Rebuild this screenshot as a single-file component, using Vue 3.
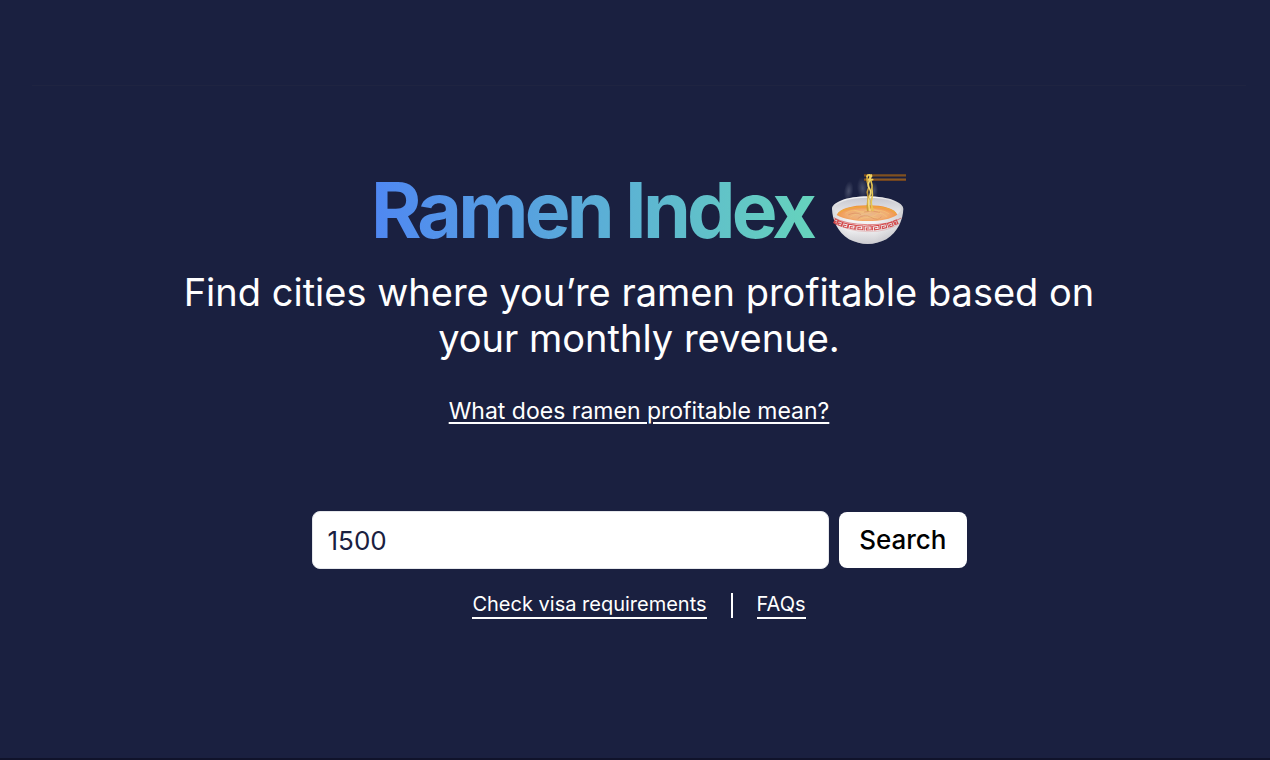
<script setup>
import { ref } from 'vue'

const revenue = ref('1500')
const submitted = ref('')

function search() {
  submitted.value = revenue.value
}

// One meander of the band; each is placed along the curve of the bowl.
const keys = [
  { x: 54, y: 179, angle: 24, width: 10 },
  { x: 65, y: 184, angle: 20, width: 14 },
  { x: 81, y: 190, angle: 14, width: 17 },
  { x: 101, y: 194, angle: 9, width: 20 },
  { x: 124, y: 197, angle: 3, width: 21 },
  { x: 149, y: 198, angle: -2, width: 21 },
  { x: 173, y: 197, angle: -8, width: 20 },
  { x: 196, y: 193, angle: -13, width: 18 },
  { x: 217, y: 188, angle: -20, width: 14 },
  { x: 233, y: 181, angle: -25, width: 10 },
]
</script>

<template>
  <div class="page">
    <hr class="rule" />
    <main class="hero">
      <h1 class="title">
        <span class="name">Ramen Index</span>
        <svg class="bowl" viewBox="39 38 228 216" role="img" aria-label="Steaming bowl">
          <defs>
            <linearGradient id="body" x1="0" y1="0" x2="1" y2="0">
              <stop offset="0" stop-color="#d9d9dc" />
              <stop offset=".25" stop-color="#f3f3f4" />
              <stop offset=".6" stop-color="#f4f3f4" />
              <stop offset="1" stop-color="#cfcfd3" />
            </linearGradient>
            <linearGradient id="shade" x1="0" y1="0" x2="0" y2="1">
              <stop offset=".55" stop-color="#8d8d98" stop-opacity="0" />
              <stop offset="1" stop-color="#8d8d98" stop-opacity=".4" />
            </linearGradient>
            <linearGradient id="inner" x1="0" y1="0" x2="0" y2="1">
              <stop offset="0" stop-color="#c8c8d0" />
              <stop offset=".5" stop-color="#dedee2" />
              <stop offset="1" stop-color="#f4f4f4" />
            </linearGradient>
            <radialGradient id="broth" cx=".5" cy=".6" r=".55">
              <stop offset="0" stop-color="#e9b98f" />
              <stop offset=".6" stop-color="#f0ad73" />
              <stop offset="1" stop-color="#f28c3c" />
            </radialGradient>
            <radialGradient id="steam">
              <stop offset="0" stop-color="#8b92a6" stop-opacity=".4" />
              <stop offset="1" stop-color="#8b92a6" stop-opacity="0" />
            </radialGradient>
          </defs>
          <ellipse cx="92" cy="92" rx="14" ry="30" fill="url(#steam)" transform="rotate(8 92 92)" />
          <ellipse cx="134" cy="84" rx="17" ry="34" fill="url(#steam)" transform="rotate(-6 134 84)" />
          <ellipse cx="168" cy="90" rx="12" ry="26" fill="url(#steam)" />
          <path d="M42 146C41 127 85 108 149 108S257 127 256 146C255 178 240 215 205 237Q176 251 149 251T93 237C58 215 43 178 42 146Z" fill="url(#body)" />
          <path d="M42 146C43 178 58 215 93 237Q122 251 149 251T205 237C240 215 255 178 256 146Q235 190 149 192T42 146Z" fill="url(#shade)" />
          <ellipse cx="149" cy="146" rx="100" ry="34" fill="url(#inner)" />
          <path d="M56 164C65 145 101 135 149 135S230 145 238 163C219 176 187 182 149 182S78 177 56 164Z" fill="url(#broth)" />
          <path d="M60 160C75 146 105 139 149 139S222 146 234 160" fill="none" stroke="#eda83f" stroke-width="4" />
          <g fill="none" stroke="#f6d37c" stroke-width="2" stroke-linecap="round" opacity=".6">
            <path d="M83 158Q105 144 126 154T164 152Q190 145 213 160" />
            <path d="M98 170Q118 154 140 165T180 158Q196 157 207 170" />
            <path d="M110 150Q131 160 148 149T188 158" />
            <path d="M123 177Q149 165 184 175" />
          </g>
          <g fill="none" stroke="#c86e49" stroke-width="2" stroke-linecap="round" opacity=".5">
            <path d="M92 163Q112 154 128 162" />
            <path d="M120 174Q138 159 159 171T190 170" />
            <path d="M139 155Q164 148 185 156" />
          </g>
          <g fill="none">
            <path d="M138 45H264" stroke="#80501f" stroke-width="7" />
            <path d="M138 58H264" stroke="#8f5c26" stroke-width="7" />
            <path d="M138 60H264" stroke="#6f4019" stroke-width="2" />
          </g>
          <g fill="none" stroke-linecap="round" stroke-linejoin="round">
            <path d="M149 44C143 60 149 67 152 77S143 91 149 103S145 122 149 150" stroke="#caa039" stroke-width="5" />
            <path d="M160 44C151 54 164 67 162 79S166 98 162 112S159 126 164 150" stroke="#e8c650" stroke-width="5" />
            <path d="M154 44C164 53 147 66 151 78S163 89 156 105S151 130 156 151" stroke="#f4db75" stroke-width="5" />
            <path d="M147 48Q153 39 161 47L151 59L164 58" stroke="#f0d15e" stroke-width="5" />
            <path d="M155 71Q166 78 154 91T157 119V144" stroke="#9e7421" stroke-width="1" />
          </g>
          <path d="M47 172Q82 192 149 193T250 173" fill="none" stroke="#d64f51" stroke-width="2" />
          <g v-for="key in keys" :key="key.x" :transform="`translate(${key.x} ${key.y + 5}) rotate(${key.angle})`">
            <path
              :d="`M${-key.width / 2} 7V-6H${key.width / 2}V6H${-key.width / 5}V0H${key.width / 4}`"
              fill="none"
              stroke="#d34648"
              stroke-width="3"
            />
          </g>
          <path d="M51 187Q88 213 149 214T247 188" fill="none" stroke="#d98182" stroke-width="1" />
        </svg>
      </h1>
      <p class="tagline">Find cities where you’re ramen profitable based on your monthly revenue.</p>
      <a class="explain" href="#meaning">What does ramen profitable mean?</a>
      <form class="search" @submit.prevent="search">
        <input v-model="revenue" class="field" type="text" inputmode="numeric" aria-label="Monthly revenue" />
        <button class="submit" type="submit">Search</button>
      </form>
      <nav class="links">
        <a href="#visa">Check visa requirements</a>
        <span class="divider"></span>
        <a href="#faqs">FAQs</a>
      </nav>
    </main>
  </div>
</template>

<style>
body {
  background: #1a2040;
}
</style>

<style scoped>
.page {
  box-sizing: border-box;
  min-height: 100vh;
  padding: 85px 24px 0 32px;
  border-bottom: 2px solid #10132b;
  background: #1a2040;
  color: #fff;
  font-family: Inter, "Liberation Sans", sans-serif;
}
.rule {
  height: 1px;
  margin: 0;
  border: 0;
  background: #1f2441;
}
.hero {
  display: flex;
  flex-direction: column;
  align-items: center;
  padding-top: 77px;
}
.title {
  display: flex;
  align-items: center;
  gap: 12px;
  margin: 0;
  font-size: 77px;
  font-weight: 700;
  line-height: 94px;
  letter-spacing: -0.05em;
}
.name {
  padding-right: 6px;
  background: linear-gradient(to right, #4f87f2, #66d4bc);
  background-clip: text;
  color: transparent;
}
.bowl {
  width: 76px;
  height: 72px;
  margin-bottom: 2px;
}
.tagline {
  max-width: 960px;
  margin: 12px 0 0;
  font-size: 38px;
  line-height: 46px;
  text-align: center;
}
.explain {
  margin-top: 34px;
  color: inherit;
  font-size: 23px;
  line-height: 32px;
  text-underline-offset: 3px;
  text-decoration-thickness: 2px;
}
.search {
  display: flex;
  align-items: center;
  gap: 10px;
  width: 100%;
  max-width: 655px;
  margin-top: 84px;
}
.field {
  box-sizing: border-box;
  flex: 1;
  min-width: 0;
  height: 58px;
  padding: 0 15px;
  border: 1px solid #e5e7eb;
  border-radius: 8px;
  background: #fff;
  color: #1a2040;
  font: 400 26px/32px Inter, "Liberation Sans", sans-serif;
}
.submit {
  height: 56px;
  padding: 0 20px;
  border: 0;
  border-radius: 8px;
  background: #fff;
  color: #000;
  font: 500 26px/32px Inter, "Liberation Sans", sans-serif;
}
.links {
  display: flex;
  align-items: center;
  gap: 24px;
  margin-top: 22px;
  font-size: 20px;
  line-height: 26px;
}
.links a {
  border-bottom: 2px solid #fff;
  color: inherit;
  text-decoration: none;
}
.divider {
  width: 2px;
  height: 25px;
  background: #fff;
}
</style>
